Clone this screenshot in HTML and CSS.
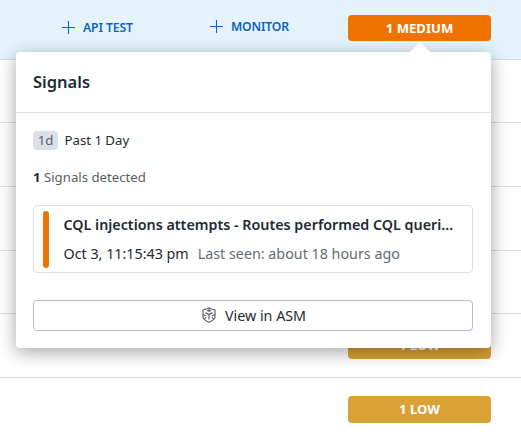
FILE: index.html
```html
<!DOCTYPE html>
<html lang="en">
<head>
<meta charset="utf-8">
<title>Signals</title>
<link rel="stylesheet" href="styles.css">
</head>
<body>
<main class="table">
  <div class="row row-active">
    <a class="action"><svg class="plus" viewBox="0 0 13 13"><path d="M6.5 0v13M0 6.5h13"/></svg><span class="label-api">API TEST</span></a>
    <a class="action action-monitor"><svg class="plus" viewBox="0 0 13 13"><path d="M6.5 0v13M0 6.5h13"/></svg><span class="label-monitor">MONITOR</span></a>
    <span class="badge medium"><span class="label-medium">1 MEDIUM</span></span>
  </div>
  <div class="row short"></div>
  <div class="row"></div>
  <div class="row"></div>
  <div class="row short"></div>
  <div class="row"><span class="badge low"><span class="label-low">1 LOW</span></span></div>
  <div class="row last"><span class="badge low"><span class="label-low">1 LOW</span></span></div>
</main>
<section class="popover">
  <header class="head"><h2 class="title">Signals</h2></header>
  <div class="body">
    <div class="range"><span class="chip">1d</span><span class="range-text">Past 1 Day</span></div>
    <div class="count"><b>1</b> Signals detected</div>
    <article class="signal">
      <span class="severity"></span>
      <div class="details">
        <div class="name">CQL injections attempts - Routes performed CQL queri...</div>
        <div class="meta"><span class="time">Oct 3, 11:15:43 pm</span><span class="seen">Last seen: about 18 hours ago</span></div>
      </div>
    </article>
    <button class="view">
      <svg class="shield" viewBox="0 0 14 16"><path d="M7 .8 9 1.8 13 3V10C13 12.5 9.5 14.1 7 15.3 4.5 14.1 1 12.5 1 10V3L5 1.8Z"/><path d="M7 1v3M5 3.3 7 4.3 9 3.3M3.4 5.6 7 7.5 10.6 5.6M7 7.5v5M1 7.6l3 1.2M4 10.2 2.6 12M13 7.6l-3 1.2M10 10.2 11.4 12"/></svg>
      <span class="label-view">View in ASM</span>
    </button>
  </div>
</section>
</body>
</html>
```
FILE: styles.css
```css
* { box-sizing: border-box; }
body {
  margin: 0;
  width: 521px;
  height: 440px;
  overflow: hidden;
  position: relative;
  background: #fff;
  color: #1c2b34;
  font-family: "Noto Sans", sans-serif;
}
.row {
  height: 64px;
  display: flex;
  justify-content: flex-end;
  align-items: flex-start;
  padding: 18px 30px 0 0;
  border-bottom: 1px solid #dcdcea;
}
.short { height: 63px; }
.last { border: 0; }
.row-active {
  height: 60px;
  padding: 15px 30px 0 62px;
  background: #e5f4fc;
  justify-content: flex-start;
}
.action {
  display: flex;
  align-items: center;
  gap: 8px;
  width: 148px;
  height: 25px;
  color: #0b62c1;
  font-size: 12.2px;
  font-weight: 600;
  letter-spacing: -.1px;
  white-space: nowrap;
}
.action-monitor { width: 138px; height: 23px; letter-spacing: -.2px; }
.plus { width: 13px; height: 13px; fill: none; stroke: currentColor; stroke-width: 1.1; }
.badge {
  flex: none;
  width: 143px;
  height: 27px;
  border-radius: 4px;
  display: flex;
  align-items: center;
  justify-content: center;
  color: #fff;
  font-size: 13.1px;
  font-weight: 700;
}
.medium { height: 26px; background: #f07300; }
.low { background: #d9a136; padding-bottom: 1px; }
.popover {
  position: absolute;
  left: 16px;
  top: 52px;
  width: 475px;
  height: 296px;
  border-radius: 4px;
  background: #fff;
  box-shadow: 0 4px 18px rgba(0, 0, 0, .36);
}
.popover::before {
  content: "";
  position: absolute;
  left: 394px;
  top: -10px;
  border: 10px solid transparent;
  border-top: 0;
  border-bottom-color: #fff;
}
.head { height: 61px; padding: 0 17px 2px; border-bottom: 1px solid #dcdfea; display: flex; align-items: center; }
.title { margin: 0; font-size: 16.5px; font-weight: 600; }
.body { padding: 17px 18px 0 17px; }
.range { display: flex; align-items: center; height: 20px; font-size: 13.2px; gap: 6.5px; }
.chip { width: 25px; height: 19px; border-radius: 4px; background: #dcdfea; color: #585f66; line-height: 19px; text-align: center; }
.count { margin-top: 17px; height: 20px; line-height: 20px; font-size: 13.2px; color: #585f66; }
.count b { color: #1c2b34; }
.signal { margin-top: 18px; height: 68px; border: 1px solid #dcdfea; border-radius: 4px; display: flex; padding: 5px 9px; }
.severity { width: 6px; height: 57px; border-radius: 3px; background: #f07300; }
.details { margin-left: 14.5px; white-space: nowrap; }
.name { height: 29px; line-height: 28px; font-size: 14.3px; font-weight: 600; }
.meta { display: flex; gap: 9px; line-height: 28px; font-size: 14.3px; }
.seen { color: #636b72; }
.view {
  margin-top: 27px;
  width: 100%;
  height: 31px;
  padding: 0 0 0 2px;
  border: 1px solid #b5bbd9;
  border-radius: 4px;
  background: #fff;
  display: flex;
  align-items: center;
  justify-content: center;
  gap: 9px;
  color: #1c2b34;
  font: 14.3px "Noto Sans", sans-serif;
}
.shield { width: 14px; height: 16px; margin-top: -1px; fill: none; stroke: #59636b; stroke-width: 1.2; }
```
